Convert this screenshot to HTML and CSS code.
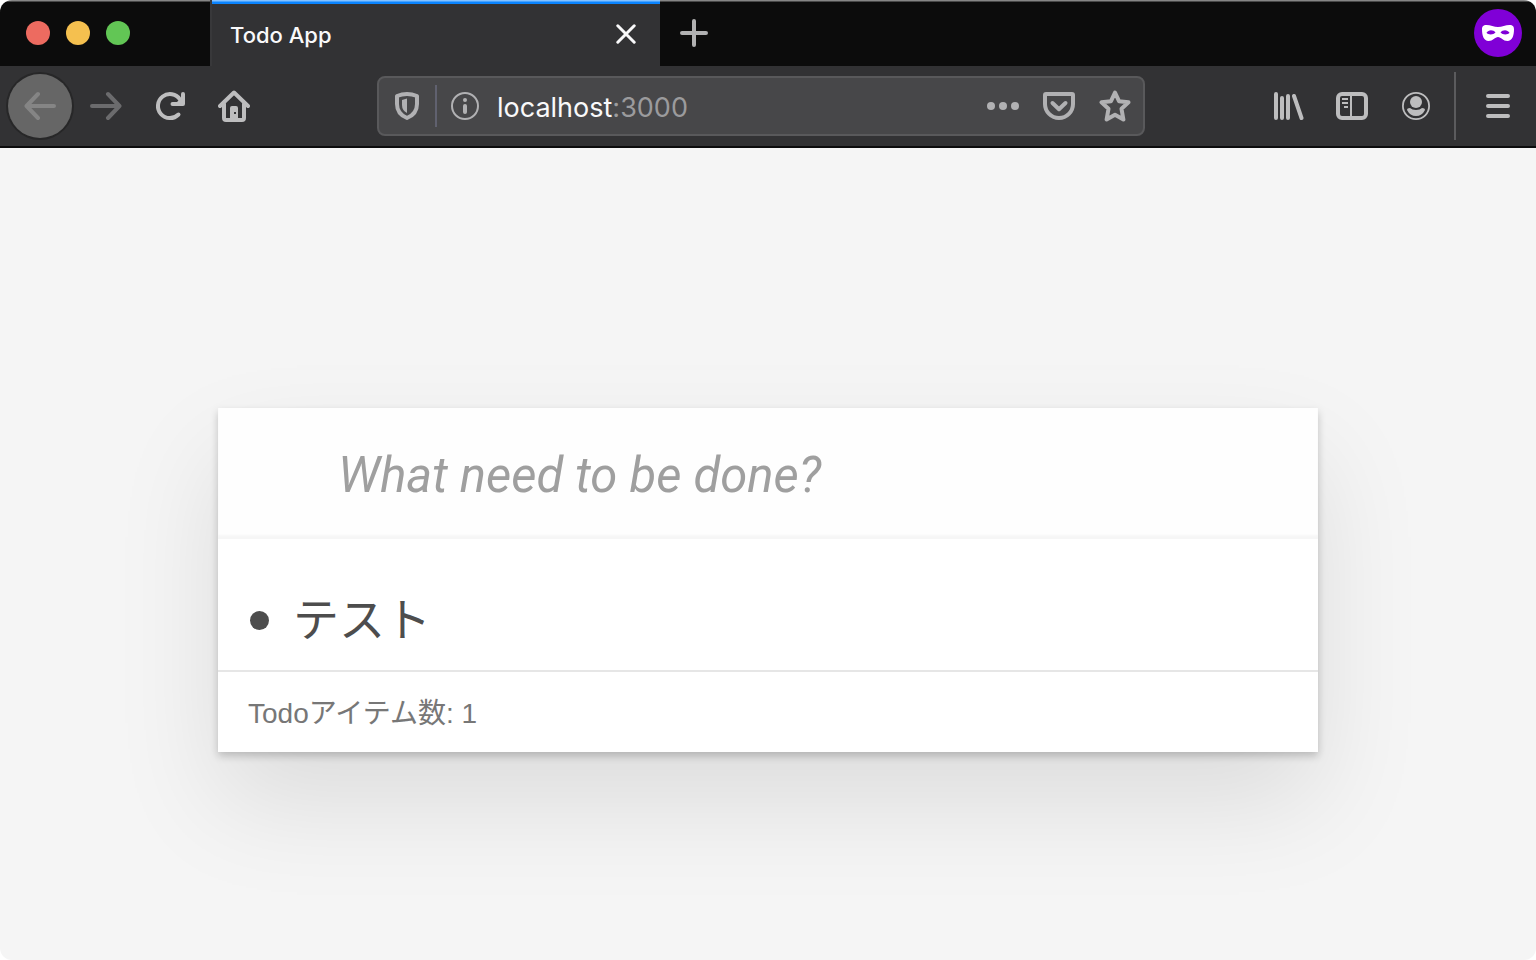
FILE: index.html
```html
<!DOCTYPE html>
<html lang="ja">
<head>
<meta charset="utf-8">
<title>Todo App</title>
<link rel="stylesheet" href="styles.css">
</head>
<body>
<div class="window">
  <header class="chrome">
    <div class="tabstrip">
      <div class="lights">
        <button class="light light-close" aria-label="Close window"></button>
        <button class="light light-min" aria-label="Minimize window"></button>
        <button class="light light-max" aria-label="Zoom window"></button>
      </div>
      <div class="tab">
        <span class="tab-title">Todo App</span>
        <button class="tab-close" aria-label="Close tab">
          <svg width="20" height="20" viewBox="0 0 20 20" fill="none" stroke="currentColor" stroke-width="3" stroke-linecap="round"><path d="M1.8 1.8l16.4 16.4M18.2 1.8L1.8 18.2"/></svg>
        </button>
      </div>
      <button class="new-tab" aria-label="New tab">
        <svg width="28" height="28" viewBox="0 0 28 28" fill="none" stroke="currentColor" stroke-width="4" stroke-linecap="round"><path d="M14 2v24M2 14h24"/></svg>
      </button>
      <div class="private">
        <svg width="32" height="16" viewBox="0 0 32 16" fill="currentColor" fill-rule="evenodd"><path d="M4.500 0C8.500 0 12 2 16 2S23.500 0 27.500 0C31 0 32 1.500 32 4.500C32 11 30 16 25.500 16C21 16 19 12 16 12S11 16 6.500 16C2 16 0 11 0 4.500C0 1.500 1 0 4.500 0ZM4.500 7.800C6 9.900 11.500 10 13.500 7.500C11.500 4.500 6.500 4.100 4.500 7.800ZM18.500 7.500C20.500 10 26 9.900 27.500 7.800C25.500 4.100 20.500 4.500 18.500 7.500Z"/></svg>
      </div>
    </div>
    <nav class="toolbar">
      <button class="tool tool-back" aria-label="Back">
        <svg width="32" height="32" viewBox="0 0 32 32" fill="none" stroke="currentColor" stroke-width="4" stroke-linecap="round" stroke-linejoin="round"><path d="M30 16H3M14 4L2.500 16L14 28"/></svg>
      </button>
      <button class="tool tool-forward" aria-label="Forward">
        <svg width="32" height="32" viewBox="0 0 32 32" fill="none" stroke="currentColor" stroke-width="4" stroke-linecap="round" stroke-linejoin="round"><path d="M2 16h27M18 4l11.500 12L18 28"/></svg>
      </button>
      <button class="tool" aria-label="Reload">
        <svg width="32" height="32" viewBox="0 0 32 32" fill="none" stroke="currentColor" stroke-width="4" stroke-linecap="round" stroke-linejoin="round"><path d="M24.500 24.500A12 12 0 1 1 26 9.500"/><path d="M29 4v10H18.500"/><path fill="currentColor" stroke="none" d="M22 13l7-7v8z"/></svg>
      </button>
      <button class="tool" aria-label="Home">
        <svg width="32" height="32" viewBox="0 0 32 32" fill="none" stroke="currentColor" stroke-width="4" stroke-linecap="round" stroke-linejoin="round"><path d="M2 16L16 2.500L30 16"/><path d="M6 14v14q0 2 2 2h16q2 0 2-2V14"/><path fill="currentColor" fill-rule="evenodd" stroke="none" d="M12 30V18q0-2 2-2h4q2 0 2 2v12zM16 22v2h2v-2z"/></svg>
      </button>
      <span class="spring"></span>
      <div class="urlbar">
        <button class="url-icon" aria-label="Tracking protection">
          <svg width="24" height="28" viewBox="0 0 24 28"><path fill="none" stroke="currentColor" stroke-width="4" stroke-linejoin="round" d="M2 4Q7 2 12 2T22 4V12Q22 22 12 26Q2 22 2 12Z"/><path fill="currentColor" d="M12 6.500L7 8V13Q7 18.500 12 21Z"/></svg>
        </button>
        <span class="url-rule"></span>
        <button class="url-icon" aria-label="Site information">
          <svg width="28" height="28" viewBox="0 0 28 28" fill="none" stroke="currentColor"><circle cx="14" cy="14" r="13" stroke-width="2"/><path stroke-width="4" stroke-linecap="round" d="M14 14v6"/><circle cx="14" cy="8" r="2" fill="currentColor" stroke="none"/></svg>
        </button>
        <div class="url-text">localhost<span class="url-port">:3000</span></div>
        <button class="url-icon" aria-label="Page actions">
          <svg width="32" height="8" viewBox="0 0 32 8" fill="currentColor"><circle cx="4" cy="4" r="4"/><circle cx="16" cy="4" r="4"/><circle cx="28" cy="4" r="4"/></svg>
        </button>
        <button class="url-icon" aria-label="Save to Pocket">
          <svg width="32" height="28" viewBox="0 0 32 28" fill="none" stroke="currentColor" stroke-width="4" stroke-linecap="round" stroke-linejoin="round"><path d="M3 2h26q1 0 1 1v9a14 14 0 0 1-28 0V3q0-1 1-1z"/><path d="M9.500 11l6.500 6.200l6.500-6.200"/></svg>
        </button>
        <button class="url-icon" aria-label="Bookmark">
          <svg width="32" height="32" viewBox="0 0 32 32" fill="none" stroke="currentColor" stroke-width="4" stroke-linejoin="round"><path d="M16 2.500l4 8.700l9.500 1.100l-7 6.500l1.900 10.700l-8.400-4.700l-8.400 4.700l1.900-10.700l-7-6.500l9.500-1.100z"/></svg>
        </button>
      </div>
      <span class="spring"></span>
      <button class="tool" aria-label="Library">
        <svg width="32" height="28" viewBox="0 0 32 28" fill="none" stroke="currentColor" stroke-width="4" stroke-linecap="round"><path d="M4 2v24M10 6v20M16 4v22M22 4l7.500 22"/></svg>
      </button>
      <button class="tool" aria-label="Sidebars">
        <svg width="32" height="28" viewBox="0 0 32 28" fill="none" stroke="currentColor"><rect x="2" y="2" width="28" height="24" rx="4" stroke-width="4"/><path stroke-width="2" d="M15 3v22M6 7h6M6 11h6M8 15h4"/></svg>
      </button>
      <button class="tool" aria-label="Account">
        <svg width="28" height="28" viewBox="0 0 28 28"><circle cx="14" cy="14" r="13.100" fill="none" stroke="currentColor" stroke-width="1.800"/><circle cx="14" cy="10" r="6" fill="currentColor"/><path fill="currentColor" d="M8 16Q10 18 14 18T20 16Q23 16 23 18Q20 24 14 24T5 18Q5 16 8 16Z"/></svg>
      </button>
      <span class="tool-rule"></span>
      <button class="tool" aria-label="Menu">
        <svg width="24" height="24" viewBox="0 0 24 24" stroke="currentColor" stroke-width="4" stroke-linecap="round"><path d="M2 2h20M2 12h20M2 22h20"/></svg>
      </button>
    </nav>
  </header>
  <main class="page">
    <section class="todoapp">
      <form class="todo-form">
        <input class="new-todo" type="text" placeholder="What need to be done?" aria-label="What need to be done?" autocomplete="off">
      </form>
      <ul class="todo-list">
        <li class="todo-item">テスト</li>
      </ul>
      <footer class="footer">Todoアイテム数: 1</footer>
    </section>
  </main>
</div>
</body>
</html>
```
FILE: styles.css
```css
* { box-sizing: border-box; }

body {
  margin: 0;
  background: #fff;
  font-family: Inter, "Noto Sans CJK JP", sans-serif;
}

button {
  display: flex;
  align-items: center;
  justify-content: center;
  padding: 0;
  border: 0;
  background: none;
  color: inherit;
}

svg { display: block; }

.window {
  display: flex;
  flex-direction: column;
  min-height: 100vh;
  border-radius: 12px;
  overflow: hidden;
  background: #f5f5f5;
}

.chrome { border-bottom: 2px solid #0c0c0d; }

/* Tab strip */
.tabstrip {
  display: flex;
  align-items: center;
  height: 66px;
  padding-right: 14px;
  background: linear-gradient(#868686 1px, #0c0c0c 2px);
}

.lights {
  display: flex;
  gap: 16px;
  width: 210px;
  padding-left: 26px;
}

.light {
  width: 24px;
  height: 24px;
  border-radius: 50%;
}

.light-close { background: #ed6b60; }
.light-min { background: #f5c04f; }
.light-max { background: #62c655; }

.tab {
  display: flex;
  align-items: center;
  justify-content: space-between;
  align-self: stretch;
  width: 450px;
  padding: 2px 24px 0 18px;
  border-left: 2px solid #38383a;
  background: linear-gradient(#84c1ff 1px, #0a84ff 2px, #0a84ff 4px, #323234 4px);
  color: #f9f9fa;
}

.tab-title {
  padding-top: 2px;
  font-size: 22px;
  font-weight: 500;
  line-height: 28px;
}

.new-tab {
  width: 68px;
  height: 64px;
  color: #b1b1b2;
}

.private {
  display: flex;
  align-items: center;
  justify-content: center;
  width: 48px;
  height: 48px;
  margin-left: auto;
  border-radius: 50%;
  background: #8000d7;
  color: #fff;
}

/* Navigation toolbar */
.toolbar {
  display: flex;
  align-items: center;
  height: 80px;
  padding: 0 6px 0 8px;
  background: #323234;
  color: #bdbdbe;
}

.tool {
  flex: none;
  width: 64px;
  height: 64px;
}

.tool-back {
  border-radius: 50%;
  background: #666;
  box-shadow: 0 0 0 2px #272728;
  color: #858585;
}

.tool-forward {
  margin-left: 2px;
  color: #6b6b6d;
}

.spring { flex: 1 1 111px; }

.tool-rule {
  width: 2px;
  height: 68px;
  margin: 0 10px 0 6px;
  background: #5b5b5d;
}

.urlbar {
  display: flex;
  align-items: center;
  flex: 7 1 768px;
  height: 60px;
  border: 2px solid #59595b;
  border-radius: 8px;
  background: #474749;
  color: #b1b1b3;
}

.url-icon {
  flex: none;
  width: 56px;
  height: 56px;
}

.url-rule {
  width: 2px;
  height: 42px;
  background: #60616f;
}

.url-text {
  flex: 1;
  padding: 3px 0 0 4px;
  font-size: 27px;
  line-height: 36px;
  color: #f9f9fa;
}

.url-port { color: #9b9b9d; }

/* Todo application */
.page {
  flex: 1;
  padding: 260px 24px 0;
  color: #4d4d4d;
}

.todoapp {
  max-width: 1100px;
  margin: 0 auto;
  background: #fff;
  box-shadow: 0 4px 8px rgba(0, 0, 0, 0.2), 0 50px 100px rgba(0, 0, 0, 0.1);
}

.todo-form { display: flex; }

.new-todo {
  width: 100%;
  padding: 34px 32px 30px 120px;
  border: 0;
  outline: 0;
  background: #fefefe;
  box-shadow: inset 0 -4px 2px rgba(0, 0, 0, 0.03);
  font: italic 49px/67px Roboto, "Noto Sans CJK JP", sans-serif;
  color: inherit;
}

.new-todo::placeholder {
  color: #9f9f9f;
  opacity: 1;
}

.todo-list {
  margin: 0;
  padding: 52px 32px 20px;
  list-style: none;
  font-family: "Liberation Sans", "Noto Sans CJK JP", sans-serif;
  font-size: 46px;
  line-height: 59px;
}

.todo-item {
  display: flex;
  align-items: center;
  gap: 24px;
}

.todo-item::before {
  content: "";
  width: 19px;
  height: 19px;
  border-radius: 50%;
  background: currentColor;
}

.footer {
  padding: 22px 30px 18px;
  border-top: 2px solid #e6e6e6;
  font-family: "Liberation Sans", "Noto Sans CJK JP", sans-serif;
  font-size: 28px;
  line-height: 40px;
  color: #777;
}
```
